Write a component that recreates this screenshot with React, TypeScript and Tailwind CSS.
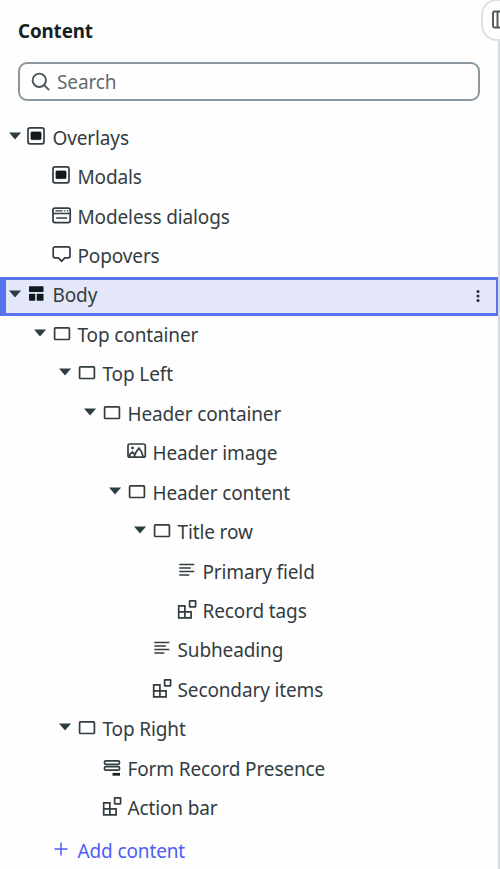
import React from "react";

type IconName =
  | "modal"
  | "dialog"
  | "popover"
  | "body"
  | "container"
  | "image"
  | "text"
  | "component"
  | "form";

interface Item {
  label: string;
  icon: IconName;
  indent: string;
  open?: boolean;
  selected?: boolean;
}

const L0 = "pl-[9px]";
const L1 = "pl-[34px]";
const L2 = "pl-[59px]";
const L3 = "pl-[84px]";
const L4 = "pl-[109px]";
const L5 = "pl-[134px]";
const L6 = "pl-[159px]";

const items: Item[] = [
  { label: "Overlays", icon: "modal", indent: L0, open: true },
  { label: "Modals", icon: "modal", indent: L1 },
  { label: "Modeless dialogs", icon: "dialog", indent: L1 },
  { label: "Popovers", icon: "popover", indent: L1 },
  { label: "Body", icon: "body", indent: "pl-[3px]", open: true, selected: true },
  { label: "Top container", icon: "container", indent: L1, open: true },
  { label: "Top Left", icon: "container", indent: L2, open: true },
  { label: "Header container", icon: "container", indent: L3, open: true },
  { label: "Header image", icon: "image", indent: L4 },
  { label: "Header content", icon: "container", indent: L4, open: true },
  { label: "Title row", icon: "container", indent: L5, open: true },
  { label: "Primary field", icon: "text", indent: L6 },
  { label: "Record tags", icon: "component", indent: L6 },
  { label: "Subheading", icon: "text", indent: L5 },
  { label: "Secondary items", icon: "component", indent: L5 },
  { label: "Top Right", icon: "container", indent: L2, open: true },
  { label: "Form Record Presence", icon: "form", indent: L3 },
  { label: "Action bar", icon: "component", indent: L3 },
];

function Glyph({ name }: { name: IconName }) {
  switch (name) {
    case "modal":
      return (
        <>
          <rect x="2" y="1.8" width="16" height="16" rx="2" />
          <rect x="5" y="6" width="10" height="7.6" rx="0.8" fill="#10191c" stroke="#10191c" strokeWidth="0.8" />
        </>
      );
    case "dialog":
      return (
        <>
          <rect x="2" y="3.2" width="17.2" height="14.4" rx="2" />
          <path d="M2 8.500h17.200M5.200 13h10.800" />
          <path d="M4.500 5.800h7M13.200 5.800h1.400M16 5.800h1.400" strokeWidth="1.300" />
        </>
      );
    case "popover":
      return (
        <path d="M4 2.800h13.200a1.800 1.800 0 0 1 1.800 1.800v7.400a1.800 1.800 0 0 1-1.800 1.800h-3.400l-3.200 3.400-3.200-3.400H4a1.800 1.800 0 0 1-1.800-1.800V4.600a1.800 1.800 0 0 1 1.800-1.800z" />
      );
    case "body":
      return (
        <g fill="#10191c" stroke="none">
          <rect x="3" y="2.300" width="14.500" height="5.800" rx="0.800" />
          <rect x="3" y="9.800" width="6.200" height="7" rx="0.800" />
          <rect x="10.700" y="9.800" width="6.800" height="7" rx="0.800" />
        </g>
      );
    case "container":
      return <rect x="3.600" y="4.800" width="14.800" height="11.700" rx="0.800" />;
    case "image":
      return (
        <>
          <rect x="2" y="3" width="17.300" height="13.200" rx="1.800" />
          <circle cx="6.500" cy="6.900" r="1.200" fill="currentColor" strokeWidth="0.500" />
          <path d="M3.800 15.800V13.300l2.400-2.100 2.700 2.300M8 15.800l1.700-4.100L12.900 7.300l2.500 3.300 1.800 5.200" />
        </>
      );
    case "text":
      return <path d="M3.300 4.500h15M3.300 8h11.500M3.300 11.500h15M3.300 15h10" />;
    case "component":
      return (
        <>
          <rect x="13.600" y="1.800" width="6" height="6" rx="0.300" />
          <path d="M2.700 6.800h6.200v6.100h6.200v6H2.700zM2.700 12.900h6.200v6" />
        </>
      );
    case "form":
      return (
        <>
          <rect x="3.500" y="3.800" width="15" height="3.600" rx="1.300" />
          <rect x="3.500" y="9.600" width="15" height="3.600" rx="1.300" />
          <path d="M11.500 17.300h7.500" strokeWidth="2.800" stroke="#1a2327" />
        </>
      );
  }
}

function TreeRow({ item }: { item: Item }) {
  return (
    <div
      className={`flex h-[39.440px] items-center ${item.indent} ${
        item.selected
          ? "-mb-px mr-px mt-px border-y-[3px] border-l-[6px] border-r-[3px] border-[#5873ee] bg-[#e4e7fa]"
          : ""
      }`}
    >
      <span className="mb-1 flex w-[17px] shrink-0">
        {item.open && (
          <svg width="13" height="8" viewBox="0 0 13 8">
            <path d="M0 .500h12.100L6.050 7.600z" fill="#2c3e43" />
          </svg>
        )}
      </span>
      <svg
        className="mb-1 shrink-0 text-[#333d41]"
        width="21"
        height="20"
        viewBox="0 0 21 20"
        fill="none"
        stroke="currentColor"
        strokeWidth="1.700"
      >
        <Glyph name={item.icon} />
      </svg>
      <span className={`ml-[5.500px] whitespace-nowrap ${item.selected ? "mb-[2px]" : ""}`}>{item.label}</span>
      {item.selected && (
        <svg className="ml-auto mr-[15px]" width="6" height="14" viewBox="0 0 6 14" fill="#222b2f">
          <circle cx="3" cy="2.600" r="1.500" />
          <circle cx="3" cy="7" r="1.500" />
          <circle cx="3" cy="11.400" r="1.500" />
        </svg>
      )}
    </div>
  );
}

export default function App() {
  return (
    <main className="relative h-[869px] w-[500px] overflow-hidden bg-[#fefefe] font-['Noto_Sans',sans-serif] text-[19px] leading-[26px] tracking-[-0.130px] text-[#343c40]">
      <div className="absolute inset-y-0 right-0 w-[2px] bg-[#d8dce2]" />
      <button className="absolute -top-px left-[481px] flex h-[42px] w-[44px] items-center rounded-[16px] border-2 border-[#dde0e4] bg-[#fefefe] pl-[8px]">
        <svg width="20" height="20" viewBox="0 0 20 20" fill="none" stroke="#4e565a" strokeWidth="1.900">
          <rect x="2" y="1.500" width="17" height="16" rx="1.500" />
          <path d="M6.500 1.500v16" />
        </svg>
      </button>
      <h1 className="pl-[18px] pt-[18px] text-[18.800px] font-bold text-[#161f22]">Content</h1>
      <div className="ml-[18px] mt-[18px] flex h-[38.500px] w-[462px] items-center rounded-[9px] border-2 border-[#8c989f] pl-[11px] text-[#626a6e]">
        <svg width="20" height="20" viewBox="0 0 20 20" fill="none" stroke="#4b5458" strokeWidth="1.900">
          <circle cx="8.300" cy="9.300" r="6.700" />
          <path d="M13.100 14.100l5 5" />
        </svg>
        <span className="ml-[6px] mt-[2px]">Search</span>
      </div>
      <div className="mt-[17.500px]">
        {items.map((item) => (
          <TreeRow key={item.label} item={item} />
        ))}
      </div>
      <button className="mt-[10px] flex items-center pl-[54px] text-[#4d5df5]">
        <svg className="mb-[4px]" width="14" height="14" viewBox="0 0 14 14" stroke="currentColor" strokeWidth="1.500">
          <path d="M7 .5v13M.5 7h13" />
        </svg>
        <span className="ml-[9.500px]">Add content</span>
      </button>
    </main>
  );
}
